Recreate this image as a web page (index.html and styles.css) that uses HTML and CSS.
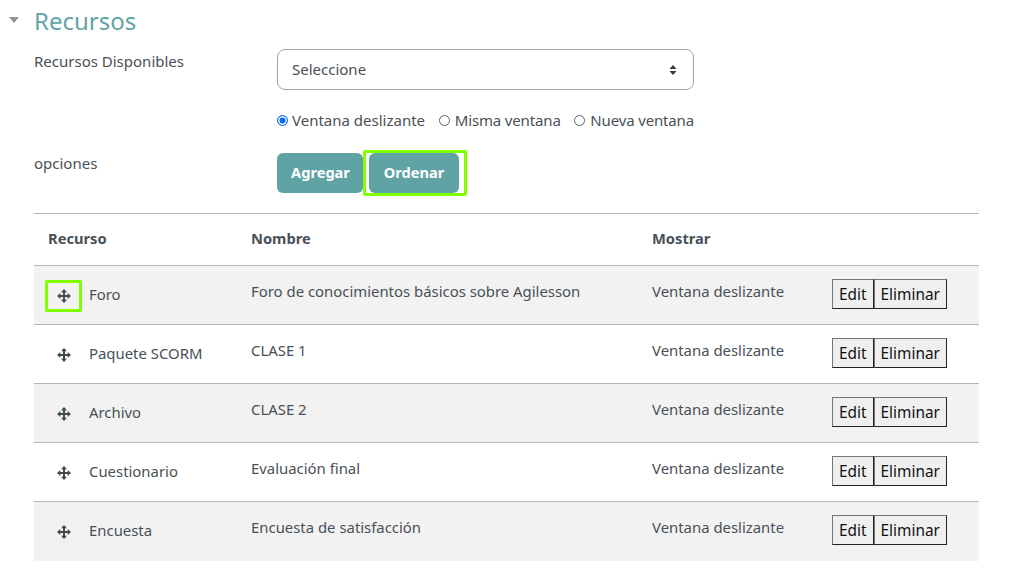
FILE: index.html
```html
<!DOCTYPE html>
<html lang="es">
<head>
<meta charset="utf-8">
<title>Recursos</title>
<link rel="stylesheet" href="styles.css">
</head>
<body>
<main class="page">
  <header class="section-head">
    <span class="caret"></span>
    <h2 class="section-title">Recursos</h2>
  </header>
  <section class="form-row row-select">
    <div class="form-label">Recursos Disponibles</div>
    <div class="form-field">
      <div class="select">
        <span>Seleccione</span>
        <svg class="select-arrows" viewBox="0 0 8 12" width="8" height="12"><path d="M4 1 7.5 5H.5zM4 11 .5 7h7z" fill="#343a40"/></svg>
      </div>
    </div>
  </section>
  <section class="form-row row-radios">
    <div class="form-label"></div>
    <div class="radios">
      <label class="radio"><span class="dot dot-on"></span>Ventana deslizante</label>
      <label class="radio radio-tight"><span class="dot"></span>Misma ventana</label>
      <label class="radio radio-tight"><span class="dot"></span>Nueva ventana</label>
    </div>
  </section>
  <section class="form-row row-actions">
    <div class="form-label">opciones</div>
    <div class="actions">
      <button class="btn btn-add">Agregar</button>
      <span class="marked"><button class="btn btn-sort">Ordenar</button></span>
    </div>
  </section>
  <table class="grid">
    <thead>
      <tr><th class="c1">Recurso</th><th class="c2">Nombre</th><th class="c3">Mostrar</th><th class="c4"></th></tr>
    </thead>
    <tbody>
      <tr>
        <td class="res"><div class="res-inner"><span class="move move-marked"><svg viewBox="0 0 14 14" width="14" height="14"><use href="#mv"/></svg></span>Foro</div></td>
        <td class="top">Foro de conocimientos básicos sobre Agilesson</td>
        <td class="top">Ventana deslizante</td>
        <td class="ops"><div class="ops-inner"><button class="mini">Edit</button><button class="mini">Eliminar</button></div></td>
      </tr>
      <tr>
        <td class="res"><div class="res-inner"><span class="move"><svg viewBox="0 0 14 14" width="14" height="14"><use href="#mv"/></svg></span>Paquete SCORM</div></td>
        <td class="top">CLASE 1</td>
        <td class="top">Ventana deslizante</td>
        <td class="ops"><div class="ops-inner"><button class="mini">Edit</button><button class="mini">Eliminar</button></div></td>
      </tr>
      <tr>
        <td class="res"><div class="res-inner"><span class="move"><svg viewBox="0 0 14 14" width="14" height="14"><use href="#mv"/></svg></span>Archivo</div></td>
        <td class="top">CLASE 2</td>
        <td class="top">Ventana deslizante</td>
        <td class="ops"><div class="ops-inner"><button class="mini">Edit</button><button class="mini">Eliminar</button></div></td>
      </tr>
      <tr>
        <td class="res"><div class="res-inner"><span class="move"><svg viewBox="0 0 14 14" width="14" height="14"><use href="#mv"/></svg></span>Cuestionario</div></td>
        <td class="top">Evaluación final</td>
        <td class="top">Ventana deslizante</td>
        <td class="ops"><div class="ops-inner"><button class="mini">Edit</button><button class="mini">Eliminar</button></div></td>
      </tr>
      <tr>
        <td class="res"><div class="res-inner"><span class="move"><svg viewBox="0 0 14 14" width="14" height="14"><use href="#mv"/></svg></span>Encuesta</div></td>
        <td class="top">Encuesta de satisfacción</td>
        <td class="top">Ventana deslizante</td>
        <td class="ops"><div class="ops-inner"><button class="mini">Edit</button><button class="mini">Eliminar</button></div></td>
      </tr>
    </tbody>
  </table>
</main>
<svg class="defs" width="0" height="0"><defs><g id="mv" fill="#3f4a52"><path d="M6 3h2v8H6z"/><path d="M3 6h8v2H3z"/><path d="M7 0 10 3.3H4zM7 14 4 10.7h6zM0 7 3.3 4v6zM14 7 10.7 10V4z"/></g></defs></svg>
</body>
</html>
```
FILE: styles.css
```css
* { box-sizing: border-box; }
html, body { margin: 0; padding: 0; background: #fff; }
body {
  font-family: "Noto Sans", "Open Sans", sans-serif;
  font-size: 15px;
  color: #495057;
  overflow: hidden;
  height: 576px;
}
.page { width: 1009px; padding: 0 30px 0 34px; }
.section-head { position: relative; height: 49px; padding-top: 5px; }
.caret {
  position: absolute; left: -25px; top: 17px;
  width: 0; height: 0;
  border-left: 5px solid transparent;
  border-right: 5px solid transparent;
  border-top: 6px solid #8f959a;
}
.section-title { margin: 0; font-size: 24px; font-weight: 400; line-height: 32px; color: #5fa3a5; }
.form-row { display: flex; }
.form-label { width: 243px; flex: none; }
.row-select { height: 41px; }
.row-select .form-label { line-height: 24px; }
.select {
  width: 417px; height: 41px; border: 1px solid #9aa5a5; border-radius: 8px;
  display: flex; align-items: center; justify-content: space-between;
  padding: 0 16px 2px 14px;
}
.select-arrows { display: block; margin-top: 2px; }
.row-radios { margin-top: 19px; height: 22px; }
.radios { width: 417px; display: flex; justify-content: space-between; align-items: center; line-height: 22px; }
.radio { display: flex; align-items: center; gap: 4px; }
.radio-tight { gap: 5px; letter-spacing: -0.15px; }
.dot { width: 11px; height: 11px; border-radius: 50%; border: 1px solid #5f6468; background: #fff; flex: none; }
.dot-on { border-color: #0a6cf5; background: #0a6cf5; box-shadow: inset 0 0 0 1.5px #fff; }
.row-actions { margin-top: 22px; height: 40px; }
.row-actions .form-label { line-height: 21px; }
.actions { display: flex; align-items: center; }
.btn {
  font: 700 14.6px "Noto Sans", sans-serif;
  color: #fff; background: #5fa3a5; border: 0; border-radius: 6px;
  height: 40px; padding: 0 0 2px;
}
.btn-add { width: 86px; padding-left: 1px; }
.btn-sort { width: 90px; display: block; }
.marked {
  display: block; margin: -3px 0; border: 3px solid #7fff00; border-radius: 2px;
  padding: 0 5px 0 3px; position: relative;
}
.grid { width: 945px; margin-top: 20px; border-collapse: collapse; table-layout: fixed; }
.c1 { width: 203px; } .c2 { width: 401px; } .c3 { width: 180px; }
th { height: 52px; text-align: left; font-weight: 700; font-size: 14.7px; padding: 0 14px 4px; border-top: 1px solid #aeb8b8; color: #495057; }
td { height: 59px; border-top: 1px solid #aeb8b8; padding: 0 14px; font-size: 14.9px; }
tbody tr:nth-child(odd) { background: #f2f2f2; }
td.top { vertical-align: top; padding-top: 13px; line-height: 24px; }
td.res { padding-left: 11px; padding-bottom: 2px; }
td.ops { padding-bottom: 2px; }
.res-inner { display: flex; align-items: center; gap: 7px; }
.move { width: 37px; height: 32px; margin-top: 4px; display: flex; align-items: center; justify-content: center; border: 3px solid transparent; border-radius: 2px; }
.move svg { display: block; }
.move-marked { border-color: #7fff00; }
.ops-inner { display: flex; }
.mini {
  font: 400 15.4px "Noto Sans", sans-serif; color: #111;
  background: #efefef; border: 1px solid; border-color: #767676 #222 #222 #767676;
  height: 30px; padding: 0 6px; margin: 0;
}
.defs { position: absolute; }
```
